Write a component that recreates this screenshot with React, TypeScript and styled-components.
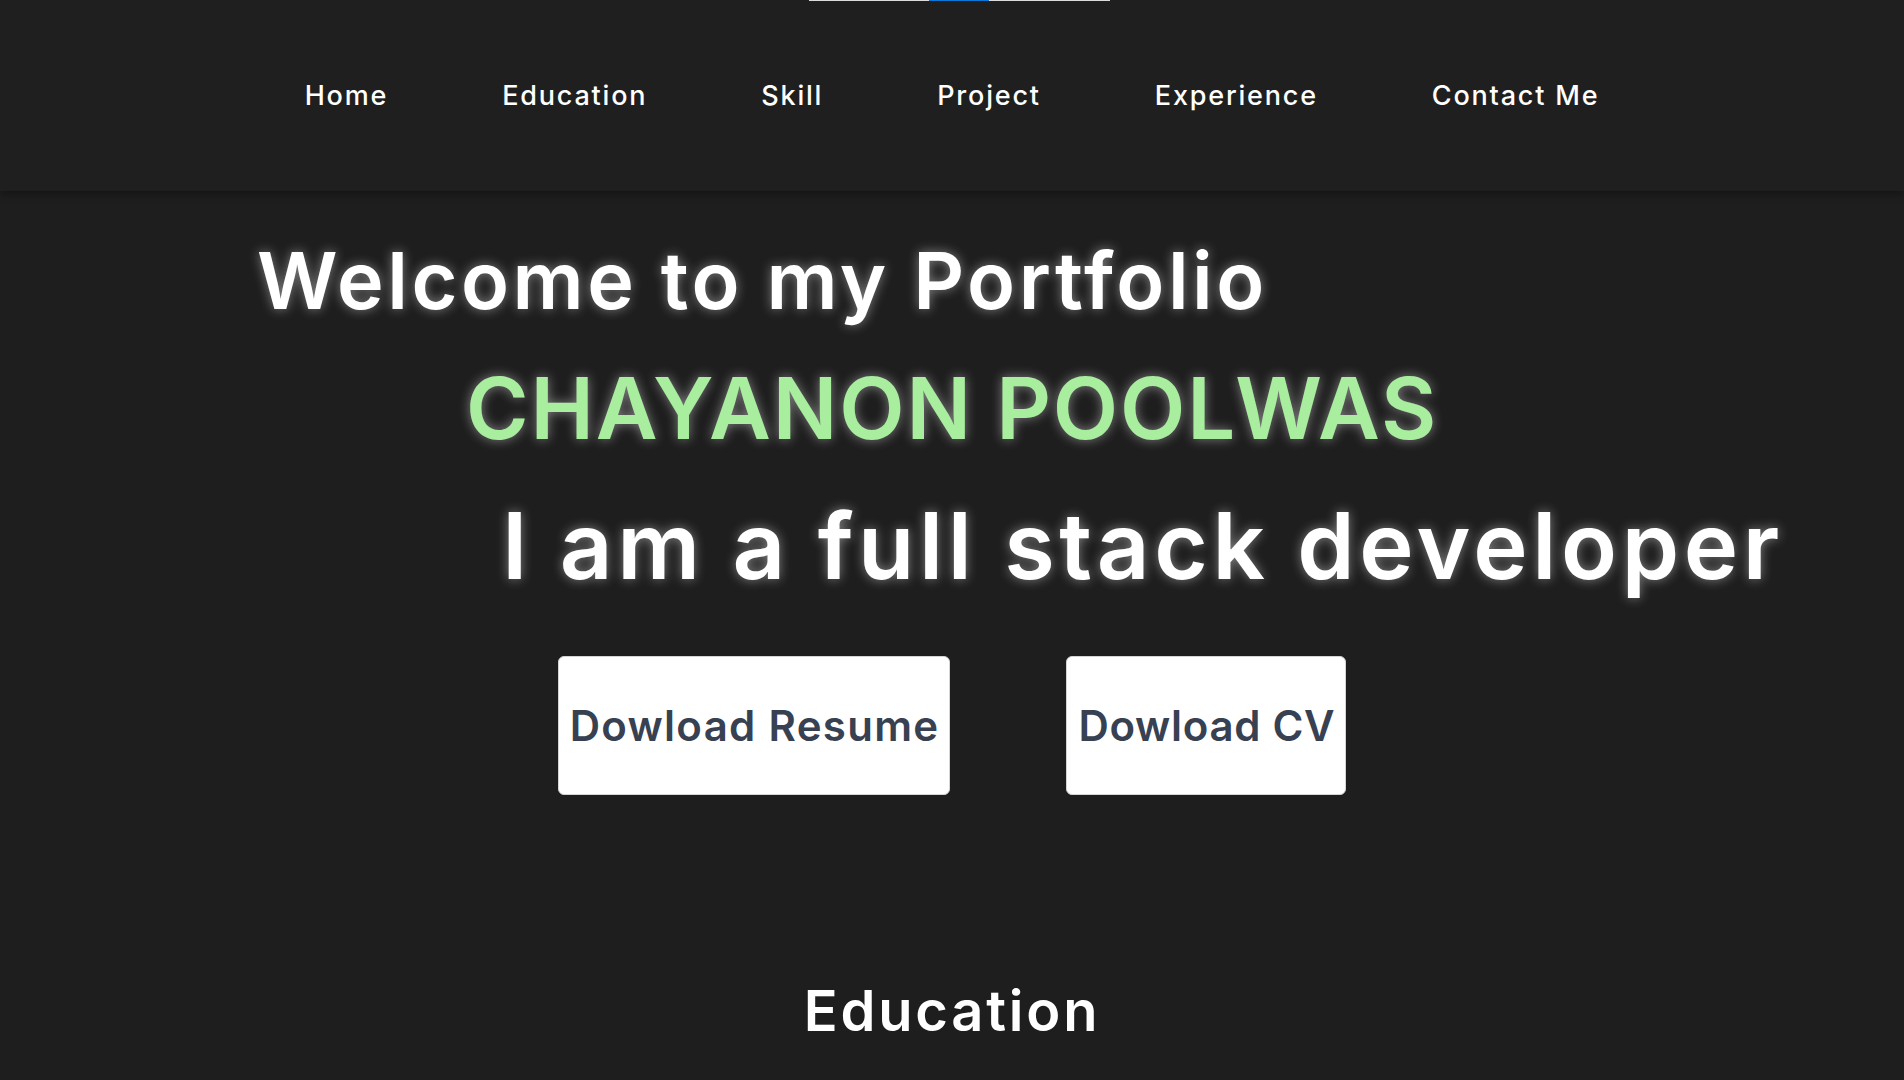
import React from "react";
import styled, { createGlobalStyle } from "styled-components";

const GlobalStyle = createGlobalStyle`
  html, body {
    margin: 0;
    padding: 0;
    background: #1e1e1e;
    font-family: Inter, "Noto Sans", "Liberation Sans", sans-serif;
    scrollbar-width: none;
  }
  body::-webkit-scrollbar { display: none; }
  * { box-sizing: border-box; }
`;

const Page = styled.div`
  position: relative;
  min-height: 1080px;
  background: #1e1e1e;
  color: #fff;
`;

const ScrollTrack = styled.div`
  position: absolute;
  top: 0;
  left: 809px;
  width: 301px;
  height: 1px;
  background: #dcdcdc;
  z-index: 10;
`;

const ScrollThumb = styled.div`
  position: absolute;
  top: 0;
  left: 120px;
  width: 60px;
  height: 1px;
  background: #0a78d7;
`;

const NavBar = styled.nav`
  height: 191px;
  display: flex;
  align-items: center;
  justify-content: center;
  gap: 114px;
  background: #1f1f1f;
  box-shadow: 0 3px 8px rgba(0, 0, 0, 0.35);
  position: relative;
  z-index: 2;
`;

const NavLink = styled.a`
  color: #fff;
  font-size: 27px;
  font-weight: 500;
  letter-spacing: 1.8px;
  text-decoration: none;
  line-height: 1;
  cursor: pointer;
`;

const Hero = styled.section`
  display: flex;
  flex-direction: column;
  padding-top: 50px;
`;

const HeroLine = styled.h1<{ $indent: number; $size: number; $gap: number; $green?: boolean; $spacing: number }>`
  margin: ${(p) => p.$gap}px 0 0 ${(p) => p.$indent}px;
  font-size: ${(p) => p.$size}px;
  font-weight: 600;
  line-height: 1;
  letter-spacing: ${(p) => p.$spacing}px;
  white-space: nowrap;
  color: ${(p) => (p.$green ? "#a8ee9e" : "#ffffff")};
  text-shadow: 0 0 12px rgba(255, 255, 255, 0.45);
`;

const ButtonRow = styled.div`
  display: flex;
  justify-content: center;
  gap: 116px;
  margin-top: 64px;
`;

const DownloadButton = styled.button<{ $spacing: number }>`
  height: 139px;
  padding: 0 10px 0 11px;
  background: #ffffff;
  border: 1px solid #d4d4d4;
  border-radius: 6px;
  color: #374151;
  font-family: Inter, "Noto Sans", "Liberation Sans", sans-serif;
  font-size: 42px;
  font-weight: 600;
  letter-spacing: ${(p) => p.$spacing}px;
  white-space: nowrap;
  cursor: pointer;
`;

const SectionTitle = styled.h2`
  margin: 188px 0 0;
  text-align: center;
  font-size: 56px;
  font-weight: 600;
  line-height: 1;
  letter-spacing: 2.8px;
  color: #fff;
`;

const navItems = ["Home", "Education", "Skill", "Project", "Experience", "Contact Me"];

export default function App() {
  return (
    <Page>
      <GlobalStyle />
      <ScrollTrack>
        <ScrollThumb />
      </ScrollTrack>
      <NavBar>
        {navItems.map((item) => (
          <NavLink key={item}>{item}</NavLink>
        ))}
      </NavBar>
      <Hero>
        <HeroLine $indent={257} $size={79} $gap={0} $spacing={3.5}>
          Welcome to my Portfolio
        </HeroLine>
        <HeroLine $indent={466} $size={85} $gap={46} $spacing={1.9} $green>
          CHAYANON POOLWAS
        </HeroLine>
        <HeroLine $indent={502} $size={92} $gap={49} $spacing={4.6}>
          I am a full stack developer
        </HeroLine>
        <ButtonRow>
          <DownloadButton $spacing={1.3}>Dowload Resume</DownloadButton>
          <DownloadButton $spacing={0.7}>Dowload CV</DownloadButton>
        </ButtonRow>
      </Hero>
      <SectionTitle>Education</SectionTitle>
    </Page>
  );
}
